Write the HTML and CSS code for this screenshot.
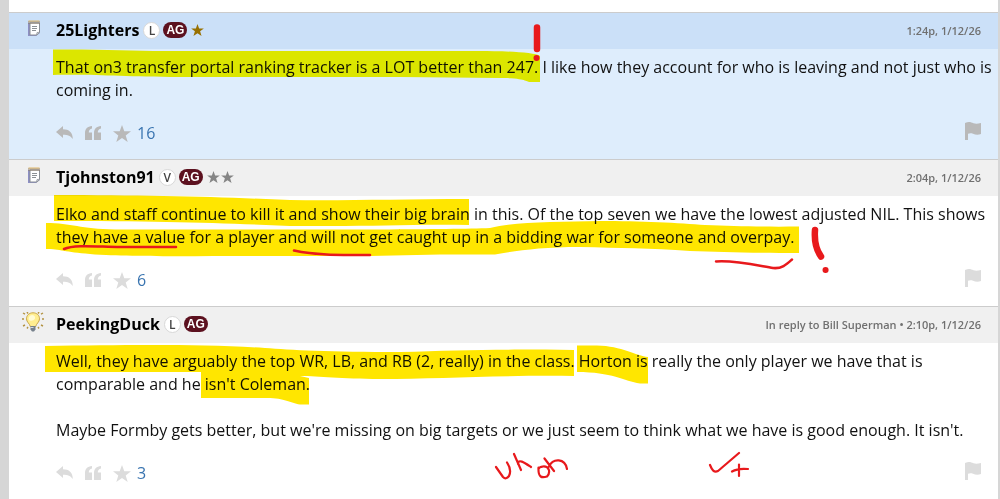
FILE: index.html
```html
<!DOCTYPE html>
<html lang="en">
<head>
<meta charset="utf-8">
<meta name="viewport" content="width=device-width, initial-scale=1">
<title>Forum thread</title>
<link rel="stylesheet" href="styles.css">
</head>
<body>
<svg class="symbols" aria-hidden="true">
  <symbol id="reply" viewBox="0 0 17 14"><path d="M0 6 7 0v3.300c6 0 9.800 3.200 9.800 9.700C14.500 10 12 8.800 7 8.800V12Z"/></symbol>
  <symbol id="quote" viewBox="0 0 16 14"><path d="M7 0v2.500C4.800 3 3.800 4.500 3.800 6.500H7V14H0V7C0 3 2.500 .3 7 0ZM16 0v2.500c-2.200.5-3.200 2-3.200 4H16V14H9V7C9 3 11.500.3 16 0Z"/></symbol>
  <symbol id="star" viewBox="0 0 18 17"><path d="m9 0 2.300 6.300H18l-5.300 4.100 2 6.600L9 13l-5.700 4 2-6.600L0 6.300h6.700Z"/></symbol>
  <symbol id="flag" viewBox="0 0 16 18"><path d="M0 1C4-.8 6 .3 8.500 1.300 11 2 13 1.700 16 1v11c-3 1.200-5.500.8-8-.2-2-.7-3.300-.6-5 0V18H0Z"/></symbol>
  <symbol id="note" viewBox="0 0 14 17"><path d="M1 3h11l1 10-4 3H1Z" fill="#8d8fc4"/><path d="M3 3h9.500v9.500L10 15H3Z" fill="#fff" stroke="#8a8f95"/><path d="m9.500 15 .5-2.500 2.500-.2" fill="#c3c7cc" stroke="#8a8f95" stroke-width=".7"/><path d="M5 6.500h5M5 8.500h5M5 10.500h4" stroke="#8b9094"/><path d="M1.500 2.500h11" stroke="#8b7965" stroke-width="3" stroke-dasharray="1 1"/><path d="M1.500 1h11" stroke="#dfb76a"/></symbol>
  <symbol id="bulb" viewBox="0 0 22 20"><path d="m1 1 2 1.200M5 0l1 1.500M17 0l-1 1.500M21 1l-2 1.200M0 7h2M20 7h2M1 14l2-1M5 16.500l1-1.500M21 14l-2-1M17 16.500 16 15" stroke="#b39343" stroke-width="1.400"/><path d="M11 .8c-4 0-6.500 2.700-6.500 6 0 3.400 3.300 4.800 3.800 7.700h5.400c.5-2.900 3.800-4.300 3.800-7.700 0-3.300-2.500-6-6.500-6Z" fill="#ffee90" stroke="#c9a64a"/><path d="M10 3C7.500 3.400 6.500 5 6.800 7.500 8 9.500 11.500 9 13 6.500 13.500 4.500 12 3 10 3Z" fill="#fffbd4"/><path d="M8.500 14h5v3.500L12 19.500h-2L8.500 17.500Z" fill="#77818c"/><path d="M8.500 15.500h3" stroke="#d5dbe0"/></symbol>
</svg>
<main class="thread">
  <article class="post post--new">
    <header class="post-head">
      <svg class="post-icon" aria-hidden="true"><use href="#note"/></svg>
      <h2 class="author">25Lighters</h2>
      <span class="tag">L</span><span class="club">AG</span>
      <span class="rank rank--gold"><svg><use href="#star"/></svg></span>
      <span class="meta">1:24p, 1/12/26</span>
    </header>
    <div class="post-body">
      <p>That on3 transfer portal ranking tracker is a LOT better than 247. I like how they account for who is leaving and not just who is coming in.</p>
      <div class="actions">
        <button type="button" aria-label="Reply"><svg class="i-reply"><use href="#reply"/></svg></button>
        <button type="button" aria-label="Quote"><svg class="i-quote"><use href="#quote"/></svg></button>
        <button type="button" aria-label="Star"><svg class="i-star"><use href="#star"/></svg></button>
        <a class="count" href="#">16</a>
        <button type="button" class="flag" aria-label="Flag"><svg class="i-flag"><use href="#flag"/></svg></button>
      </div>
    </div>
  </article>
  <article class="post">
    <header class="post-head">
      <svg class="post-icon" aria-hidden="true"><use href="#note"/></svg>
      <h2 class="author">Tjohnston91</h2>
      <span class="tag">V</span><span class="club">AG</span>
      <span class="rank"><svg><use href="#star"/></svg><svg><use href="#star"/></svg></span>
      <span class="meta">2:04p, 1/12/26</span>
    </header>
    <div class="post-body">
      <p>Elko and staff continue to kill it and show their big brain in this. Of the top seven we have the lowest adjusted NIL. This shows they have a value for a player and will not get caught up in a bidding war for someone and overpay.</p>
      <div class="actions">
        <button type="button" aria-label="Reply"><svg class="i-reply"><use href="#reply"/></svg></button>
        <button type="button" aria-label="Quote"><svg class="i-quote"><use href="#quote"/></svg></button>
        <button type="button" aria-label="Star"><svg class="i-star"><use href="#star"/></svg></button>
        <a class="count" href="#">6</a>
        <button type="button" class="flag" aria-label="Flag"><svg class="i-flag"><use href="#flag"/></svg></button>
      </div>
    </div>
  </article>
  <article class="post">
    <header class="post-head">
      <svg class="post-icon post-icon--bulb" aria-hidden="true"><use href="#bulb"/></svg>
      <h2 class="author">PeekingDuck</h2>
      <span class="tag">L</span><span class="club">AG</span>
      <span class="meta">In reply to Bill Superman • 2:10p, 1/12/26</span>
    </header>
    <div class="post-body">
      <p>Well, they have arguably the top WR, LB, and RB (2, really) in the class. Horton is really the only player we have that is comparable and he isn't Coleman.</p>
      <p>Maybe Formby gets better, but we're missing on big targets or we just seem to think what we have is good enough. It isn't.</p>
      <div class="actions">
        <button type="button" aria-label="Reply"><svg class="i-reply"><use href="#reply"/></svg></button>
        <button type="button" aria-label="Quote"><svg class="i-quote"><use href="#quote"/></svg></button>
        <button type="button" aria-label="Star"><svg class="i-star"><use href="#star"/></svg></button>
        <a class="count" href="#">3</a>
        <button type="button" class="flag" aria-label="Flag"><svg class="i-flag"><use href="#flag"/></svg></button>
      </div>
    </div>
  </article>
</main>
<svg class="overlay marker" viewBox="0 0 1000 499" aria-hidden="true">
  <path class="marker-lime" d="M53 49.500C100 49 130 51 165 51L480 51C500 51 535 52 540 56V82H531C525 82 528 78 500 78L400 77H180C120 77 100 74 53 75Z"/>
  <path d="M54 195C150 195 220 197 290 200 340 201 400 199 469 199V225C420 224 380 226 330 226H290C220 223 160 221 54 221Z"/>
  <path d="M46 223C72 223 80 229 115 229.500H380C430 229 470 229 490 228 505 224 525 223 550 222L600 221C640 221 680 223 705 225 735 226 760 227 799 226.500V253C750 253 720 252 690 251 650 248 620 248 580 247 540 247 515 251 495 254.500H440L370 256H250C190 256 120 257 90 254 65 252 60 249 46 249Z"/>
  <path d="M45 346C130 345 200 344 265 348 290 350 330 352 400 352 460 350 500 349 574 350V376C500 375 440 379 380 379 340 379 320 376 300 376L309 378V404.500H300C290 403 285 398 267 398H201V372H45Z"/>
  <path d="M577 345.500H597C622 346 636 356 648 357V383.500H640C624 381 612 372 577 372Z"/>
</svg>
<svg class="overlay ink" viewBox="0 0 1000 499" role="img" aria-label="Handwritten marks: uh oh, check plus">
  <path stroke-width="6.500" d="M537 27.500V49M815 230C814 243 817 251 821 256.500"/>
  <path stroke-width="6" d="M536.500 58h.1M825.500 270h.1"/>
  <path stroke-width="2.500" d="M64 249C75 244 100 247 120 247H176M294 250.500C315 255 335 255 370 255M716 261.500C735 260 760 266 773 268 782 269 787 264 792 259.500"/>
  <path stroke-width="2.200" d="M496 467 503 477Q506 480 509 476 512 470 507 462.500M514 454 521 470M518 464C518 458 525 463 531 467M538.500 467.500C538 478 542 478 547 476.500 551 472 549 466 543 466.500 540 467 539 467 538.500 469M544.500 458.500 554 471M549 466.500C553 458 565 458 567 469M710 465C712 470 714 473 718 471L739 453M739 464.500V476M732 471.500Q738 468 748 469"/>
</svg>
</body>
</html>
```
FILE: styles.css
```css
* { box-sizing: border-box; }
body {
  position: relative;
  margin: 0;
  overflow: hidden;
  background: #d6d6d6;
  color: #111;
  font: 16px/23px "Open Sans", sans-serif;
}
.symbols { display: none; }
svg { display: block; fill: currentColor; }
.thread {
  margin: 0 2px 0 9px;
  padding: 12px 0 0;
  background: #fff;
}
.post { border-top: 1px solid #ccc; }
.post-head {
  display: flex;
  align-items: center;
  height: 36px;
  padding: 0 17px 2px 13px;
  background: #f0f0f0;
}
.post--new { background: #deedfc; }
.post--new .post-head { background: #cbe0f8; }
.post-icon {
  width: 14px;
  height: 17px;
  margin: 0 15px 4px 5px;
}
.post-icon--bulb {
  width: 22px;
  height: 20px;
  margin: 0 12px 4px 0;
}
.author {
  margin: 0 4px 0 0;
  color: #000;
  font-size: 16px;
  font-weight: 700;
}
.tag {
  width: 17px;
  height: 17px;
  border: 1px solid #d8d8d8;
  border-radius: 50%;
  background: #fff;
  color: #444;
  font: 600 12px/15px "Open Sans", sans-serif;
  text-align: center;
}
.club {
  width: 24px;
  height: 16px;
  margin: 0 4px 0 3px;
  border-radius: 8px;
  background: #5c111f;
  color: #fff;
  font: 700 12px/16px "Liberation Sans", sans-serif;
  text-align: center;
}
.rank { display: flex; gap: 1px; color: #858585; }
.rank svg { width: 13px; height: 12px; }
.rank--gold { color: #987000; }
.meta {
  margin-left: auto;
  color: #707070;
  font-size: 11px;
  font-weight: 600;
}
.post-body { padding: 7px 17px 15px 47px; }
.post-body p { margin: 0 -13px 0 0; }
.post-body p + p { margin-top: 23px; }
.actions {
  display: flex;
  align-items: center;
  height: 22px;
  margin-top: 20px;
  color: #dcdcdc;
}
.post--new .actions { color: #b9b9b9; }
.actions button {
  margin: 0 12px 0 0;
  padding: 0;
  border: 0;
  background: none;
  color: inherit;
}
.actions .count {
  margin-left: -6px;
  color: #3974b0;
  text-decoration: none;
}
.actions .flag { margin: 0 0 4px auto; }
.i-reply { width: 17px; height: 14px; }
.i-quote { width: 16px; height: 14px; }
.i-star { width: 18px; height: 17px; }
.i-flag { width: 16px; height: 18px; }
.overlay {
  position: absolute;
  top: 0;
  left: 0;
  width: 1000px;
  pointer-events: none;
}
.marker { fill: #ffe600; mix-blend-mode: multiply; }
.marker-lime { fill: #fdf800; }
.ink {
  fill: none;
  stroke: #e8191c;
  stroke-linecap: round;
  stroke-linejoin: round;
}
```
